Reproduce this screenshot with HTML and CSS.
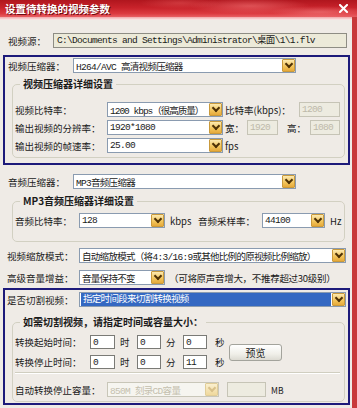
FILE: index.html
```html
<!DOCTYPE html>
<html lang="zh-CN">
<head>
    <meta charset="UTF-8">
    <meta name="viewport" content="width=device-width, initial-scale=1.0">
    <title>设置待转换的视频参数</title>
    <link rel="stylesheet" href="styles.css">
</head>
<body>
    <div class="window">
        <div class="titlebar">
            <span class="title">设置待转换的视频参数</span>
            <svg class="close" width="9" height="9" viewBox="0 0 9 9">
                <path d="M1 1 L8 8 M8 1 L1 8" stroke="#fff" stroke-width="2" stroke-linecap="square"/>
            </svg>
        </div>
        <div class="strip"></div>
        <div class="client">
            <div class="row row-out">
                <span class="lbl w45">视频源：</span>
                <div class="edit path value">C:\Documents and Settings\Administrator\桌面\1\1.flv</div>
            </div>

            <div class="panel panel-video">
                <div class="row row-in">
                    <span class="lbl w65">视频压缩器：</span>
                    <div class="combo w223"><span class="value">H264/AVC 高清视频压缩器</span><span class="drop"></span></div>
                </div>
                <fieldset class="group group-video">
                    <legend>视频压缩器详细设置</legend>
                    <div class="rows">
                        <div class="row">
                            <span class="lbl w92">视频比特率：</span>
                            <div class="combo w116"><span class="value tight">1200 kbps（很高质量）</span><span class="drop"></span></div>
                            <span class="unit w74">比特率(kbps)：</span>
                            <div class="edit disabled w41 value">1200</div>
                        </div>
                        <div class="row">
                            <span class="lbl w92">输出视频的分辨率：</span>
                            <div class="combo w116"><span class="value">1920*1080</span><span class="drop"></span></div>
                            <span class="unit w22">宽：</span>
                            <div class="edit disabled w31 value">1920</div>
                            <span class="unit unit-h">高：</span>
                            <div class="edit disabled w30 value">1080</div>
                        </div>
                        <div class="row">
                            <span class="lbl w92">输出视频的帧速率：</span>
                            <div class="combo w116"><span class="value">25.00</span><span class="drop"></span></div>
                            <span class="unit">fps</span>
                        </div>
                    </div>
                </fieldset>
            </div>

            <div class="row row-out row-audio">
                <span class="lbl w65">音频压缩器：</span>
                <div class="combo w223"><span class="value">MP3音频压缩器</span><span class="drop"></span></div>
            </div>
            <fieldset class="group group-audio">
                <legend>MP3音频压缩器详细设置</legend>
                <div class="row">
                    <span class="lbl w64">音频比特率：</span>
                    <div class="combo w86"><span class="value">128</span><span class="drop"></span></div>
                    <span class="unit unit-kbps">kbps</span>
                    <span class="lbl w64">音频采样率：</span>
                    <div class="combo w63"><span class="value">44100</span><span class="drop"></span></div>
                    <span class="unit unit-hz">Hz</span>
                </div>
            </fieldset>

            <div class="row row-wide row-scale">
                <span class="lbl w72">视频缩放模式：</span>
                <div class="combo w267"><span class="value">自动缩放模式（将4:3/16:9或其他比例的原视频比例缩放）</span><span class="drop"></span></div>
            </div>
            <div class="row row-wide row-volume">
                <span class="lbl w72">高级音量增益：</span>
                <div class="combo w86"><span class="value">音量保持不变</span><span class="drop"></span></div>
                <span class="note">（可将原声音增大，不推荐超过30级别）</span>
            </div>

            <div class="panel panel-cut">
                <div class="row row-cut">
                    <span class="lbl w72">是否切割视频：</span>
                    <div class="combo w267 selected"><span class="value">指定时间段来切割转换视频</span><span class="drop"></span></div>
                </div>
                <fieldset class="group group-cut">
                    <legend>如需切割视频，请指定时间或容量大小：</legend>
                    <div class="times">
                        <div class="time-rows">
                            <div class="row row-time">
                                <span class="lbl w75">转换起始时间：</span>
                                <div class="edit w25 value">0</div>
                                <span class="unit tu">时</span>
                                <div class="edit w24 value">0</div>
                                <span class="unit tu">分</span>
                                <div class="edit w24 value">0</div>
                                <span class="unit tu-s">秒</span>
                            </div>
                            <div class="row row-time">
                                <span class="lbl w75">转换停止时间：</span>
                                <div class="edit w25 value">0</div>
                                <span class="unit tu">时</span>
                                <div class="edit w24 value">0</div>
                                <span class="unit tu">分</span>
                                <div class="edit w24 value">11</div>
                                <span class="unit tu-s">秒</span>
                            </div>
                        </div>
                        <button class="btn">预览</button>
                    </div>
                    <div class="sep"></div>
                    <div class="row row-cap">
                        <span class="lbl w92">自动转换停止容量：</span>
                        <div class="combo w112 disabled"><span class="value">850M 刻录CD容量</span><span class="drop"></span></div>
                        <div class="edit disabled w39 mb-edit"></div>
                        <span class="unit unit-mb">MB</span>
                    </div>
                </fieldset>
            </div>
        </div>
    </div>
</body>
</html>
```

FILE: styles.css
```css
* {
    box-sizing: border-box;
}

body {
    margin: 0;
    background-color: #efebe6;
    font-family: "Noto Sans CJK SC", "Liberation Sans", sans-serif;
    font-size: 9.5px;
    color: #1a1a1a;
}

.window {
    width: 357px;
    height: 408px;
    overflow: hidden;
    background: #efebe6;
}

/* title bar */
.titlebar {
    height: 17px;
    display: flex;
    align-items: center;
    justify-content: space-between;
    padding: 0 9px 0 5px;
    background:
        radial-gradient(ellipse 60px 8px at 250px 6px, rgba(255, 140, 140, 0.45), transparent),
        radial-gradient(ellipse 50px 6px at 320px 12px, rgba(255, 160, 160, 0.4), transparent),
        radial-gradient(ellipse 40px 6px at 180px 3px, rgba(255, 120, 120, 0.3), transparent),
        linear-gradient(#b0161e, #c8222a 45%, #dc3a40 80%, #e86064);
}

.title {
    color: #fff;
    font-weight: bold;
    font-size: 10.5px;
    text-shadow: 1px 1px 0 #700a10;
}

.strip {
    height: 3px;
    background: linear-gradient(#f1a8aa, #fbeceb);
    border-right: 5px solid #c8383a;
}

.client {
    height: 388px;
    padding: 13px 2px 0 3px;
    border-right: 5px solid #c8383a;
}

/* generic rows and labels */
.row {
    display: flex;
    align-items: center;
    height: 15px;
    white-space: nowrap;
}

.row-out {
    padding-left: 5px;
}

.row-in {
    padding-left: 3px;
}

.lbl,
.unit,
.note {
    flex: none;
}

.w45 { width: 45px; }
.w64 { width: 64px; }
.w65 { width: 65px; }
.w72 { width: 72px; }
.w74 { width: 74px; }
.w75 { width: 75px; }
.w92 { width: 92px; }
.w22 { width: 22px; }

/* combo boxes */
.combo {
    flex: none;
    height: 15px;
    display: flex;
    align-items: center;
    background: #fff;
    border: 1px solid #8a9bb0;
    padding: 0 0 0 2px;
    overflow: hidden;
}

.combo .value {
    flex: 1;
    overflow: hidden;
}

.drop {
    flex: none;
    width: 13px;
    height: 13px;
    display: flex;
    justify-content: center;
    align-items: center;
    background: linear-gradient(#fdeab0, #f2c45a 60%, #e6a93a);
    border: 1px solid #c99a3c;
    border-radius: 1px;
}

.drop::after {
    content: "";
    width: 4px;
    height: 4px;
    margin-top: -3px;
    border-right: 2px solid #4e3206;
    border-bottom: 2px solid #4e3206;
    transform: rotate(45deg);
}

.combo.selected .value {
    background: #3468c2;
    color: #fff;
    height: 13px;
    margin-right: 1px;
    line-height: 13px;
    padding-left: 2px;
    margin-left: -1px;
}

.combo.disabled {
    background: #f6f5f0;
    border-color: #c8c6b8;
}

.combo.disabled .value {
    color: #c4bfae;
}

.combo.disabled .drop {
    background: linear-gradient(#fbf0cf, #efd89c);
    border-color: #e0cd98;
}

.combo.disabled .drop::after {
    border-color: #d8c08a;
}

.w223 { width: 223px; }
.w116 { width: 116px; }
.w86 { width: 86px; }
.w63 { width: 63px; }
.w267 { width: 267px; }
.w112 { width: 112px; }

/* text fields */
.edit {
    flex: none;
    height: 15px;
    line-height: 13px;
    padding-left: 2px;
    background: #fff;
    border: 1px solid #858580;
    overflow: hidden;
}

.value {
    font-family: "Liberation Mono", "Noto Sans CJK SC", monospace;
    font-size: 9.5px;
    letter-spacing: -0.7px;
}

.value.tight {
    letter-spacing: -1px;
}

.edit.path {
    width: 294px;
    background: #ecead9;
    border-color: #8e8d84;
    padding-left: 3px;
}

.edit.disabled {
    background: #edebe0;
    border-color: #c6c4b6;
    color: #bdb9aa;
}

.w41 { width: 41px; }
.w31 { width: 31px; }
.w30 { width: 30px; }
.w39 { width: 39px; }
.w25 { width: 25px; }
.w24 { width: 24px; }

.unit {
    margin-left: 2px;
}

.unit-h {
    margin-left: 9px;
    width: 23px;
}

/* framed panels */
.panel {
    border: 2px solid #1d1a7a;
}

.panel-video {
    margin-top: 7px;
    padding: 1px 0 5px 0;
}

.group {
    border: 1px solid #d2d0c2;
    border-radius: 5px;
    min-width: 0;
}

.group legend {
    margin-left: 5px;
    padding: 0 3px;
    font-size: 10px;
    font-weight: bold;
    line-height: 12px;
}

.group-video {
    margin: 5px 3px 0 7px;
    padding: 12px 0 4px 2px;
}

.rows {
    display: flex;
    flex-direction: column;
    gap: 3px;
}

.row-audio {
    margin-top: 9px;
}

.group-audio {
    margin: 6px 5px 0 9px;
    padding: 6px 0 13px 2px;
}

.unit-kbps {
    margin-left: 5px;
    width: 28px;
}

.unit-hz {
    margin-left: 5px;
}

.row-wide {
    padding-left: 4px;
}

.row-scale {
    margin-top: 6px;
}

.row-volume {
    margin-top: 7px;
}

.note {
    margin-left: 4px;
    letter-spacing: -0.3px;
}

.panel-cut {
    margin-top: 3px;
    padding: 2px 0 1px 0;
}

.row-cut {
    padding-left: 2px;
}

.group-cut {
    margin: 9px 3px 0 7px;
    padding: 7px 0 4px 2px;
}

.times {
    display: flex;
    align-items: center;
}

.time-rows {
    display: flex;
    flex-direction: column;
    gap: 6px;
}

.row-time {
    height: 14px;
}

.row-time .edit {
    height: 14px;
    border-color: #7a7a76;
}

.tu {
    margin-left: 5px;
    width: 17px;
}

.tu-s {
    margin-left: 8px;
    width: 14px;
}

.btn {
    margin-left: 0;
    width: 53px;
    height: 17px;
    padding: 0;
    font-family: inherit;
    font-size: 10px;
    color: #222;
    background: linear-gradient(#ffffff, #f0efe9 60%, #dcdad2);
    border: 1px solid #a3a39c;
    border-radius: 3px;
}

.sep {
    margin: 3px 4px 0 0;
    height: 2px;
    border-top: 1px solid #d0cec0;
    border-bottom: 1px solid #fff;
}

.row-cap {
    margin-top: 8px;
}

.mb-edit {
    margin-left: 8px;
}

.unit-mb {
    margin-left: 5px;
    font-size: 8.5px;
}
```
